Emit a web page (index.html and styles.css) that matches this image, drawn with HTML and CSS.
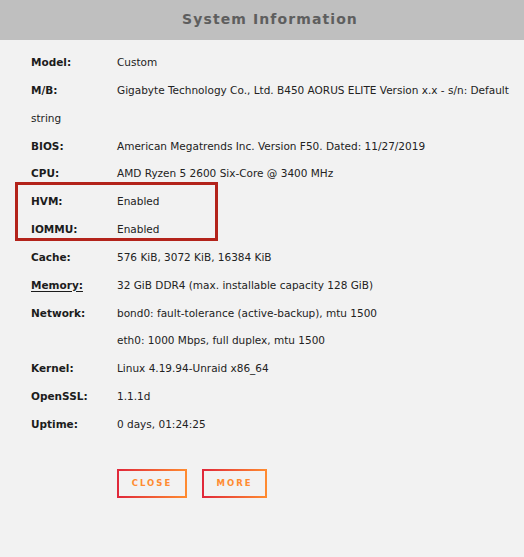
FILE: index.html
```html
<!DOCTYPE html>
<html>
<head>
<meta charset="utf-8">
<link rel="stylesheet" href="styles.css">
</head>
<body>
<div class="header">System Information</div>
<div class="content">
  <div class="row"><span class="label">Model:</span>Custom</div>
  <div class="row"><span class="label">M/B:</span>Gigabyte Technology Co., Ltd. B450 AORUS ELITE Version x.x - s/n: Default string</div>
  <div class="row"><span class="label">BIOS:</span>American Megatrends Inc. Version F50. Dated: 11/27/2019</div>
  <div class="row"><span class="label">CPU:</span>AMD Ryzen 5 2600 Six-Core @ 3400 MHz</div>
  <div class="row"><span class="label">HVM:</span>Enabled</div>
  <div class="row"><span class="label">IOMMU:</span>Enabled</div>
  <div class="row"><span class="label">Cache:</span>576 KiB, 3072 KiB, 16384 KiB</div>
  <div class="row"><span class="label"><u>Memory:</u></span>32 GiB DDR4 (max. installable capacity 128 GiB)</div>
  <div class="row"><span class="label">Network:</span>bond0: fault-tolerance (active-backup), mtu 1500</div>
  <div class="row"><span class="label"></span>eth0: 1000 Mbps, full duplex, mtu 1500</div>
  <div class="row"><span class="label">Kernel:</span>Linux 4.19.94-Unraid x86_64</div>
  <div class="row"><span class="label">OpenSSL:</span>1.1.1d</div>
  <div class="row"><span class="label">Uptime:</span>0 days, 01:24:25</div>
  <div class="highlight"></div>
  <div class="buttons">
    <button class="btn btn-close">CLOSE</button>
    <button class="btn btn-more">MORE</button>
  </div>
</div>
</body>
</html>
```
FILE: styles.css
```css
html, body {
  margin: 0;
  padding: 0;
  background: #f2f2f2;
  width: 524px;
  height: 557px;
  overflow: hidden;
}
body {
  font-family: "DejaVu Sans", sans-serif;
  color: #222;
}
.header {
  height: 40px;
  line-height: 38px;
  background: #bfbfbf;
  text-align: center;
  font-size: 14px;
  font-weight: bold;
  letter-spacing: 1.1px;
  color: #5e5e5e;
  padding-left: 16px;
}
.content {
  position: relative;
  padding: 9px 10px 0 31px;
}
.row {
  font-size: 10.5px;
  line-height: 27.85px;
  color: #222;
}
.label {
  display: inline-block;
  width: 86px;
  font-weight: bold;
  color: #1c1c1c;
}
.label u {
  text-underline-offset: 2px;
}
.highlight {
  position: absolute;
  left: 15px;
  top: 142px;
  width: 197px;
  height: 53px;
  border: 3px solid #b3231b;
}
.buttons {
  display: flex;
  gap: 15px;
  margin-top: 30px;
  padding-left: 86px;
}
.btn {
  height: 29px;
  background: transparent;
  border: 2px solid;
  border-image: linear-gradient(to right, #e0283a, #ff8b30) 1;
  color: #ff8b30;
  font-family: "DejaVu Sans", sans-serif;
  font-size: 8.5px;
  font-weight: bold;
  letter-spacing: 2px;
  padding: 0;
}
.btn-close { width: 70px; }
.btn-more { width: 65px; }
```
